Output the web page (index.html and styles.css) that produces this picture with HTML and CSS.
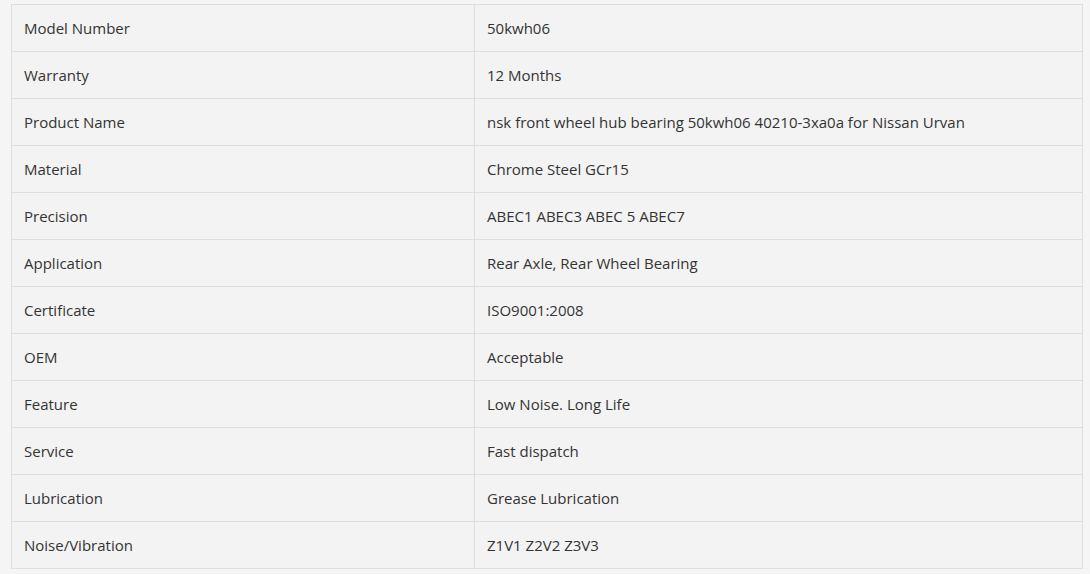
FILE: index.html
```html
<!DOCTYPE html>
<html>
<head>
<meta charset="utf-8">
<link rel="stylesheet" href="styles.css">
</head>
<body>
<table class="spec">
<tbody>
<tr><td class="k">Model Number</td><td class="v">50kwh06</td></tr>
<tr><td class="k">Warranty</td><td class="v">12 Months</td></tr>
<tr><td class="k">Product Name</td><td class="v">nsk front wheel hub bearing 50kwh06 40210-3xa0a for Nissan Urvan</td></tr>
<tr><td class="k">Material</td><td class="v">Chrome Steel GCr15</td></tr>
<tr><td class="k">Precision</td><td class="v">ABEC1 ABEC3 ABEC 5 ABEC7</td></tr>
<tr><td class="k">Application</td><td class="v">Rear Axle, Rear Wheel Bearing</td></tr>
<tr><td class="k">Certificate</td><td class="v">ISO9001:2008</td></tr>
<tr><td class="k">OEM</td><td class="v">Acceptable</td></tr>
<tr><td class="k">Feature</td><td class="v">Low Noise. Long Life</td></tr>
<tr><td class="k">Service</td><td class="v">Fast dispatch</td></tr>
<tr><td class="k">Lubrication</td><td class="v">Grease Lubrication</td></tr>
<tr><td class="k">Noise/Vibration</td><td class="v">Z1V1 Z2V2 Z3V3</td></tr>
</tbody>
</table>
</body>
</html>
```
FILE: styles.css
```css
html, body {
  margin: 0;
  padding: 0;
  background: #f5f5f5;
}
body {
  padding: 4px 7px 0 11px;
  font-family: "Open Sans", "Noto Sans", sans-serif;
  font-size: 15px;
  color: #333;
}
.spec {
  border-collapse: collapse;
  width: 1072px;
  background: #f3f3f3;
}
.spec td {
  border: 1px solid #dddddd;
  height: 47px;
  padding: 0 12px;
  box-sizing: border-box;
  vertical-align: middle;
  line-height: 20px;
}
.spec td.k {
  width: 463px;
}
```
